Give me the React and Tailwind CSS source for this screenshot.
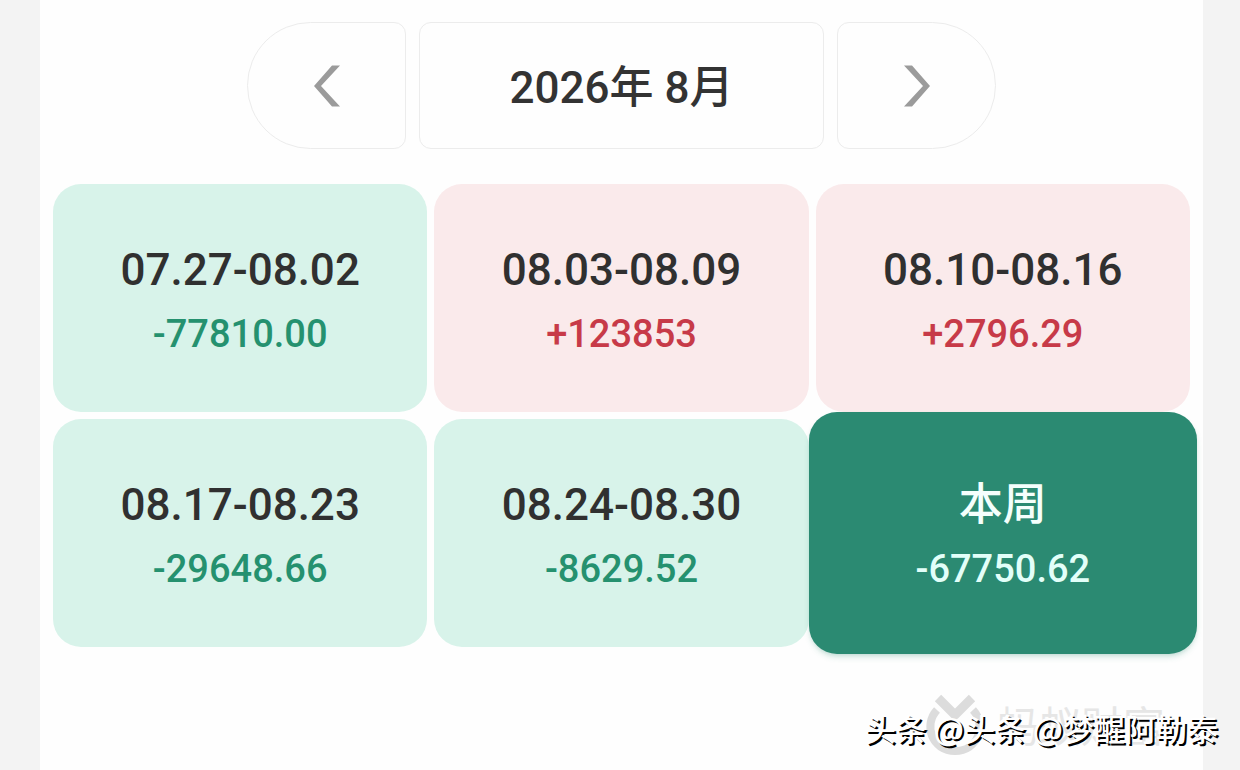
import { useState } from "react";
import clsx from "clsx";

const weeks = [
  { label: "07.27-08.02", amount: "-77810.00" },
  { label: "08.03-08.09", amount: "+123853" },
  { label: "08.10-08.16", amount: "+2796.29" },
  { label: "08.17-08.23", amount: "-29648.66" },
  { label: "08.24-08.30", amount: "-8629.52" },
  { label: "本周", amount: "-67750.62" },
];

/* ================= MONTH SWITCHER ================= */

const Chevron = ({ direction }) => (
  <svg width="26" height="42" viewBox="0 0 26 42" aria-hidden="true">
    <path
      d={
        direction === "left"
          ? "M18 0.5H26L7 21L26 41.5H18L0 21Z"
          : "M8 0.5H0L19 21L0 41.5H8L26 21Z"
      }
      fill="#9b9b9b"
    />
  </svg>
);

const MonthSwitcher = () => {
  return (
    <div className="mx-auto grid w-full max-w-[749px] grid-cols-[159fr_405fr_159fr] gap-[13px]">
      <button
        aria-label="上个月"
        className="flex h-[127px] items-center justify-center rounded-l-[64px] rounded-r-xl border border-[#ececec] cursor-pointer"
      >
        <Chevron direction="left" />
      </button>

      <button className="flex h-[127px] items-center justify-center rounded-xl border border-[#ececec] pt-1 text-[44px] font-medium text-[#333] cursor-pointer">
        2026年 8月
      </button>

      <button
        aria-label="下个月"
        className="flex h-[127px] items-center justify-center rounded-l-xl rounded-r-[64px] border border-[#ececec] cursor-pointer"
      >
        <Chevron direction="right" />
      </button>
    </div>
  );
};

/* ================= WEEK CARD ================= */

const WeekCard = ({ week, active, onSelect }) => {
  const isGain = week.amount.startsWith("+");

  return (
    <button
      onClick={onSelect}
      className={clsx(
        "flex flex-col items-center cursor-pointer",
        active
          ? "relative z-10 -m-[7px] rounded-[28px] bg-[#2b8a72] pt-[61px] pb-[53px] text-[#f4fffc] shadow-md shadow-[#2b8a72]/20"
          : "rounded-[28px] pt-[54px] pb-[46px] text-[#303030]",
        !active && (isGain ? "bg-[#faeaeb]" : "bg-[#d8f3ea]"),
      )}
    >
      <span className="text-[44px] leading-[64px] font-medium">
        {week.label}
      </span>
      <span
        className={clsx(
          "text-[38px] leading-[64px] font-medium",
          active && "text-[#e2fff9]",
          !active && (isGain ? "text-[#c73a48]" : "text-[#25916f]"),
        )}
      >
        {week.amount}
      </span>
    </button>
  );
};

/* ================= WATERMARK ================= */

const Watermark = () => (
  <div className="pointer-events-none absolute right-[22px] bottom-0 h-[78px] w-[355px]">
    <div className="absolute top-0 left-[62px] flex items-start gap-3 text-[#dcdcdc]">
      <svg width="60" height="64" viewBox="0 0 60 64" aria-hidden="true">
        <path
          d="M13 6L30 23L47 6"
          fill="none"
          stroke="currentColor"
          strokeWidth="9"
          strokeLinejoin="round"
        />
        <path
          d="M12 18C-2 33 7 59 30 59C53 59 62 33 48 18"
          fill="none"
          stroke="currentColor"
          strokeWidth="8"
        />
      </svg>
      <span className="text-[42px] leading-[72px] text-[#e6e6e6]">
        蚂蚁财富
      </span>
    </div>
    <p className="absolute right-0 bottom-[19px] font-['Noto_Sans_CJK_SC',sans-serif] text-[31px] leading-[46px] font-medium whitespace-nowrap text-white [text-shadow:2px_2px_0_#000]">
      头条 @头条 @梦醒阿勒泰
    </p>
  </div>
);

/* ================= PAGE ================= */

const App = () => {
  const [selected, setSelected] = useState(5);

  return (
    <div className="relative min-h-screen bg-[#f3f3f3] pr-[37px] pl-[40px] font-[Roboto,'Noto_Sans_CJK_SC',sans-serif]">
      <main className="min-h-screen bg-[#fefefe] px-[13px] pt-[22px] pb-[117px]">
        <MonthSwitcher />

        <div className="mt-[35px] grid grid-cols-3 gap-[7px]">
          {weeks.map((week, index) => (
            <WeekCard
              key={week.label}
              week={week}
              active={index === selected}
              onSelect={() => setSelected(index)}
            />
          ))}
        </div>
      </main>

      <Watermark />
    </div>
  );
};

export default App;
